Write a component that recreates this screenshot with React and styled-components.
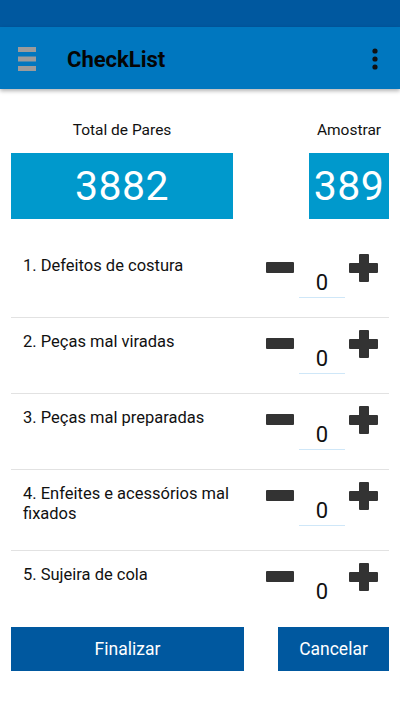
import styled, { createGlobalStyle } from "styled-components";

const GlobalStyle = createGlobalStyle`
    * {
        box-sizing: border-box;
    }
    body {
        margin: 0;
        background: #ffffff;
        font-family: Roboto, "Noto Sans", sans-serif;
    }
`;

const items = [
    "1. Defeitos de costura",
    "2. Peças mal viradas",
    "3. Peças mal preparadas",
    "4. Enfeites e acessórios mal fixados",
    "5. Sujeira de cola",
];

function MenuIcon() {
    return (
        <svg width="18" height="25" viewBox="0 0 18 25">
            <rect x="0" y="0" width="18" height="5" fill="#9b9b9b" />
            <rect x="0" y="9.5" width="18" height="5" fill="#9b9b9b" />
            <rect x="0" y="19" width="18" height="5" fill="#9b9b9b" />
        </svg>
    );
}

function MoreIcon() {
    return (
        <svg width="6" height="22" viewBox="0 0 6 22">
            <circle cx="3" cy="3" r="2.6" fill="#111" />
            <circle cx="3" cy="11" r="2.6" fill="#111" />
            <circle cx="3" cy="19" r="2.6" fill="#111" />
        </svg>
    );
}

function PlusIcon() {
    return (
        <svg width="29" height="28" viewBox="0 0 29 28">
            <path
                d="M10 1 Q10 0 11 0 H19 Q20 0 20 1 V9 H28 Q29 9 29 10 V18 Q29 19 28 19 H20 V27 Q20 28 19 28 H11 Q10 28 10 27 V19 H1 Q0 19 0 18 V10 Q0 9 1 9 H10 Z"
                fill="#333333"
            />
        </svg>
    );
}

function Counter({ last }) {
    return (
        <Controls>
            <MinusButton aria-label="menos" />
            <CountInput $last={last}>0</CountInput>
            <PlusButton aria-label="mais">
                <PlusIcon />
            </PlusButton>
        </Controls>
    );
}

export default function App() {
    return (
        <Screen>
            <GlobalStyle />
            <StatusBar />
            <Toolbar>
                <MenuIcon />
                <Title>CheckList</Title>
                <MoreIcon />
            </Toolbar>
            <Content>
                <Stats>
                    <StatColumn $width={222}>
                        <StatLabel>Total de Pares</StatLabel>
                        <StatBox>3882</StatBox>
                    </StatColumn>
                    <StatColumn $width={80}>
                        <StatLabel>Amostrar</StatLabel>
                        <StatBox>389</StatBox>
                    </StatColumn>
                </Stats>
                <List>
                    {items.map((label, i) => (
                        <Row key={label} $last={i === items.length - 1}>
                            <RowLabel>{label}</RowLabel>
                            <Counter last={i === items.length - 1} />
                        </Row>
                    ))}
                </List>
                <Actions>
                    <ActionButton $width={233}>Finalizar</ActionButton>
                    <ActionButton $width={111}>Cancelar</ActionButton>
                </Actions>
            </Content>
        </Screen>
    );
}

const Screen = styled.div`
    width: 400px;
    min-height: 711px;
    background: #ffffff;
`;

const StatusBar = styled.div`
    height: 27px;
    background: #00589f;
`;

const Toolbar = styled.header`
    height: 62px;
    display: flex;
    align-items: center;
    padding: 2px 22px 0 18px;
    background: #0077bf;
    box-shadow: 0 2px 4px rgba(0, 0, 0, 0.3);
    position: relative;
`;

const Title = styled.h1`
    flex: 1;
    margin: 0 0 0 31px;
    font-size: 22px;
    font-weight: 700;
    color: #050505;
`;

const Content = styled.main`
    padding: 31px 11px 0;
`;

const Stats = styled.section`
    display: flex;
    justify-content: space-between;
`;

const StatColumn = styled.div`
    width: ${(p) => p.$width}px;
    display: flex;
    flex-direction: column;
    align-items: center;
`;

const StatLabel = styled.div`
    font-size: 15.5px;
    line-height: 20px;
    color: #111;
    white-space: nowrap;
    margin-bottom: 13px;
`;

const StatBox = styled.div`
    width: 100%;
    height: 66px;
    display: flex;
    align-items: center;
    justify-content: center;
    background: #0099cc;
    color: #ffffff;
    font-size: 41px;
    letter-spacing: 0.5px;
`;

const List = styled.div`
    margin-top: 23px;
`;

const Row = styled.div`
    display: flex;
    align-items: flex-start;
    min-height: 76px;
    padding-left: 12px;
    border-bottom: ${(p) => (p.$last ? "none" : "1px solid #e2e2e2")};
`;

const RowLabel = styled.div`
    width: 240px;
    padding: 14px 0 26px;
    font-size: 16.5px;
    line-height: 20px;
    color: #111;
`;

const Controls = styled.div`
    display: flex;
    align-items: flex-start;
    margin-left: 3px;
`;

const MinusButton = styled.button`
    width: 28px;
    height: 11px;
    margin-top: 20px;
    padding: 0;
    border: none;
    border-radius: 1px;
    background: #333333;
`;

const CountInput = styled.div`
    width: 46px;
    height: 30px;
    margin: 26px 4px 0 5px;
    display: flex;
    align-items: center;
    justify-content: center;
    font-size: 22px;
    color: #111;
    border-bottom: 1px solid ${(p) => (p.$last ? "transparent" : "#cfe7f8")};
`;

const PlusButton = styled.button`
    margin-top: 12px;
    padding: 0;
    border: none;
    background: none;
    display: flex;
`;

const Actions = styled.div`
    display: flex;
    justify-content: space-between;
`;

const ActionButton = styled.button`
    width: ${(p) => p.$width}px;
    height: 44px;
    border: none;
    background: #00589f;
    color: #ffffff;
    font-family: Roboto, "Noto Sans", sans-serif;
    font-size: 17.5px;
`;
